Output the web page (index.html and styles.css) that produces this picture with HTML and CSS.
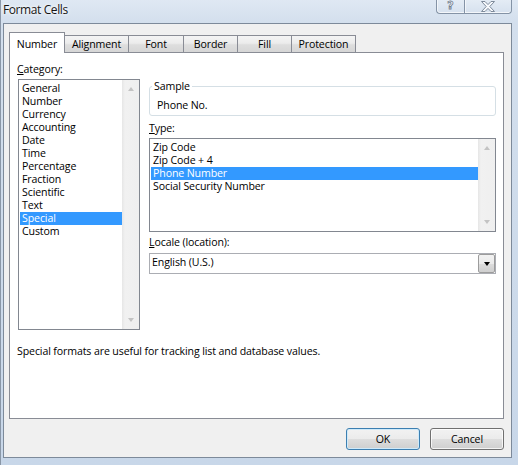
FILE: index.html
```html
<!DOCTYPE html>
<html>
<head>
<meta charset="utf-8">
<title>Format Cells</title>
<link rel="stylesheet" href="styles.css">
</head>
<body>
<div class="window">
  <div class="titlebar">
    <span class="title">Format Cells</span>
    <div class="caption-btns">
      <div class="cbtn help"><span class="qmark">?</span></div>
      <div class="cbtn close">
        <svg width="16" height="11" viewBox="0 0 16 11"><path d="M1.5 0.5 H5 L8 3.6 L11 0.5 H14.5 L9.8 5.5 L14.5 10.5 H11 L8 7.4 L5 10.5 H1.5 L6.2 5.5 Z" fill="#f7f9fc" stroke="#7e8b9b" stroke-width="1" stroke-linejoin="round"/></svg>
      </div>
    </div>
  </div>
  <div class="client">
    <div class="tabs">
      <div class="tab selected t-number">Number</div>
      <div class="tab t-align">Alignment</div>
      <div class="tab t-font">Font</div>
      <div class="tab t-border">Border</div>
      <div class="tab t-fill">Fill</div>
      <div class="tab t-prot">Protection</div>
    </div>
    <div class="panel">
      <div class="cols">
        <div class="col-left">
          <div class="label cat-label"><u>C</u>ategory:</div>
          <div class="listbox cat-list">
            <ul class="items">
              <li>General</li>
              <li>Number</li>
              <li>Currency</li>
              <li>Accounting</li>
              <li>Date</li>
              <li>Time</li>
              <li>Percentage</li>
              <li>Fraction</li>
              <li>Scientific</li>
              <li>Text</li>
              <li class="sel">Special</li>
              <li>Custom</li>
            </ul>
            <div class="vscroll"><span class="arr up"></span><span class="arr down"></span></div>
          </div>
        </div>
        <div class="col-right">
          <fieldset class="sample">
            <legend>Sample</legend>
            <div class="sample-val">Phone No.</div>
          </fieldset>
          <div class="label type-label"><u>T</u>ype:</div>
          <div class="listbox type-list">
            <ul class="items">
              <li>Zip Code</li>
              <li>Zip Code + 4</li>
              <li class="sel">Phone Number</li>
              <li>Social Security Number</li>
            </ul>
            <div class="vscroll"><span class="arr up"></span><span class="arr down"></span></div>
          </div>
          <div class="label locale-label"><u>L</u>ocale (location):</div>
          <div class="combo">
            <span class="combo-text">English (U.S.)</span>
            <div class="dd"><span class="tri"></span></div>
          </div>
        </div>
      </div>
      <p class="desc">Special formats are useful for tracking list and database values.</p>
    </div>
    <div class="buttons">
      <button class="btn default">OK</button>
      <button class="btn">Cancel</button>
    </div>
  </div>
</div>
</body>
</html>
```

FILE: styles.css
```css
html, body {
  margin: 0;
  padding: 0;
}
body {
  width: 518px;
  height: 465px;
  overflow: hidden;
  font-family: "Open Sans", "Noto Sans", sans-serif;
  font-size: 10.6px;
  letter-spacing: -0.12px;
  color: #000;
  background: #cbd9ea;
}
.window {
  width: 518px;
  height: 465px;
  box-sizing: border-box;
  display: flex;
  flex-direction: column;
  background: linear-gradient(to bottom, #dfe8f3 0px, #d3dfed 23px, #c8d7e9 100%);
  border-left: 1px solid #8a97a7;
}
.titlebar {
  height: 23px;
  flex: none;
  display: flex;
  align-items: flex-start;
}
.title {
  padding-left: 2px;
  font-size: 12px;
  letter-spacing: -0.4px;
  line-height: 19px;
  color: #151515;
  text-shadow: 0 0 5px #ffffff, 0 0 3px #ffffff;
}
.caption-btns {
  margin-left: auto;
  margin-right: 6px;
  display: flex;
  height: 14px;
}
.cbtn {
  box-sizing: border-box;
  height: 14px;
  border: 1px solid #8493a6;
  border-top: none;
  background: linear-gradient(to bottom, #e4ecf5, #d6e1ee);
  display: flex;
  align-items: center;
  justify-content: center;
  box-shadow: inset 0 -1px 0 rgba(255,255,255,0.7), inset 1px 0 0 rgba(255,255,255,0.6);
}
.help {
  width: 28px;
  border-right: none;
  border-radius: 0 0 0 4px;
}
.close {
  width: 48px;
  border-radius: 0 0 4px 0;
}
.qmark {
  font-family: "DejaVu Sans", sans-serif;
  font-weight: bold;
  font-size: 11px;
  line-height: 12px;
  color: #f7f9fc;
  -webkit-text-stroke: 0.8px #74818f;
  margin-top: -1px;
}
.close svg {
  display: block;
  margin-top: -1px;
}

.client {
  flex: 1;
  margin: 0 6px 7px 2px;
  border: 1px solid #7d8a9a;
  background: #f0f0f0;
  display: flex;
  flex-direction: column;
}
.tabs {
  display: flex;
  align-items: flex-end;
  height: 20px;
  margin-top: 8px;
  padding-left: 5px;
  position: relative;
  z-index: 1;
}
.tab {
  box-sizing: border-box;
  height: 17px;
  border: 1px solid #898c95;
  border-bottom: none;
  margin-left: -1px;
  padding-top: 2px;
  line-height: 13px;
  text-align: center;
  background: linear-gradient(to bottom, #f4f4f4 0%, #ececec 45%, #dedede 55%, #d6d6d6 100%);
}
.tab.selected {
  height: 21px;
  margin-left: 0;
  margin-bottom: -1px;
  padding-top: 5px;
  background: #ffffff;
}
.t-number { width: 56px; }
.t-align { width: 65px; }
.t-font { width: 56px; }
.t-border { width: 55px; }
.t-fill { width: 55px; }
.t-prot { width: 65px; }

.panel {
  box-sizing: border-box;
  height: 367px;
  margin: 0 7px 0 5px;
  border: 1px solid #898c95;
  background: #ffffff;
}
.cols {
  display: flex;
}
.col-left {
  padding: 10px 0 0 8px;
  width: 122px;
}
.col-right {
  margin-left: 9px;
  width: 347px;
  padding-top: 27px;
}
.label {
  line-height: 13px;
}
.cat-label {
  margin-left: -1px;
  margin-bottom: 3px;
}
.listbox {
  box-sizing: border-box;
  border: 1px solid #828790;
  display: flex;
  background: #ffffff;
}
.cat-list {
  width: 122px;
  height: 251px;
}
.type-list {
  width: 347px;
  height: 94px;
  margin-top: 3px;
}
.items {
  list-style: none;
  margin: 0;
  padding: 2px 0 0 1px;
  flex: 1;
}
.items li {
  line-height: 13px;
  height: 13px;
  padding-left: 2px;
  white-space: nowrap;
}
.items li.sel {
  background: #3399ff;
  color: #ffffff;
}
.vscroll {
  width: 17px;
  flex: none;
  display: flex;
  flex-direction: column;
  justify-content: space-between;
  align-items: center;
  padding: 7px 0 7px;
  box-sizing: border-box;
  background: linear-gradient(to right, #e6e6e6 0px, #f1f1f1 3px, #efefef 100%);
}
.arr {
  width: 0;
  height: 0;
  border-left: 3.5px solid transparent;
  border-right: 3.5px solid transparent;
}
.arr.up {
  border-bottom: 4px solid #c3c3c3;
}
.arr.down {
  border-top: 4px solid #c3c3c3;
}

.sample {
  margin: 0;
  padding: 6px 5px 3px 5px;
  border: 1px solid #d5dfe5;
  border-radius: 3px;
  min-width: 0;
}
.sample legend {
  padding: 0 2px;
  margin-left: -3px;
  line-height: 13px;
}
.sample-val {
  padding-left: 2px;
  line-height: 13px;
}
.type-label {
  margin-top: 6px;
}
.locale-label {
  margin-top: 4px;
}
.combo {
  box-sizing: border-box;
  margin-top: 4px;
  width: 347px;
  height: 21px;
  border: 1px solid #abadb3;
  display: flex;
  background: #ffffff;
}
.combo-text {
  flex: 1;
  padding: 2px 0 0 2px;
  line-height: 13px;
}
.dd {
  box-sizing: border-box;
  width: 17px;
  border: 1px solid #9c9c9c;
  border-radius: 2px;
  background: linear-gradient(to bottom, #f2f2f2 0%, #ebebeb 50%, #dddddd 51%, #cfcfcf 100%);
  display: flex;
  align-items: center;
  justify-content: center;
}
.tri {
  width: 0;
  height: 0;
  border-left: 3.5px solid transparent;
  border-right: 3.5px solid transparent;
  border-top: 4px solid #000000;
}
.desc {
  margin: 15px 0 0 7px;
  line-height: 13px;
}

.buttons {
  display: flex;
  justify-content: flex-end;
  gap: 10px;
  margin-top: 9px;
  padding-right: 7px;
}
.btn {
  box-sizing: border-box;
  width: 74px;
  height: 22px;
  padding: 0;
  font: inherit;
  letter-spacing: inherit;
  color: #000;
  line-height: 20px;
  border: 1px solid #707070;
  border-radius: 3px;
  background: linear-gradient(to bottom, #f2f2f2 0%, #ebebeb 50%, #dddddd 51%, #cfcfcf 100%);
  box-shadow: inset 0 0 0 1px rgba(255,255,255,0.75);
}
.btn.default {
  border-color: #3c7fb1;
  box-shadow: inset 0 0 0 1px #cfeafa;
}
```
